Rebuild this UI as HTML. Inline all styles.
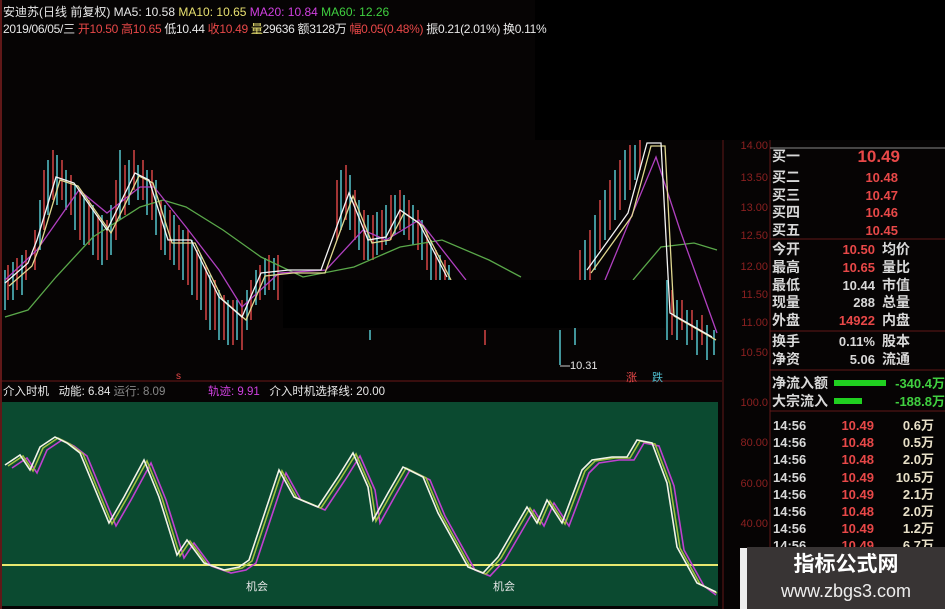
<!DOCTYPE html>
<html><head><meta charset="utf-8"><style>
*{margin:0;padding:0}
body{width:945px;height:609px;background:#060404;position:relative;overflow:hidden;font-family:"Liberation Sans","Noto Sans CJK SC",sans-serif;color:#ddd}
.t{position:absolute;white-space:nowrap;font-size:12px;line-height:14px}
.r{color:#e84848}.w{color:#e8e8e8}.y{color:#e8e070}.m{color:#d040e0}.g{color:#40d040}.gy{color:#888}
.ax{position:absolute;color:#8a2020;font-size:11px;width:46px;text-align:right;left:722px}
.rp{position:absolute;font-size:14px;line-height:17px;font-weight:bold;white-space:nowrap}
</style></head><body>
<svg width="945" height="609" style="position:absolute;left:0;top:0" xmlns="http://www.w3.org/2000/svg">
<rect x="2" y="402" width="716" height="204" fill="#0b4a30"/>
<line x1="1" y1="0" x2="1" y2="609" stroke="#601818" stroke-width="2"/>
<line x1="0" y1="381" x2="722" y2="381" stroke="#6a1818"/>
<line x1="723" y1="0" x2="723" y2="609" stroke="#601818"/>
<line x1="770" y1="140" x2="770" y2="609" stroke="#601818"/>
<line x1="770" y1="148" x2="945" y2="148" stroke="#888"/>
<line x1="770" y1="239" x2="945" y2="239" stroke="#601818"/>
<line x1="770" y1="331" x2="945" y2="331" stroke="#601818"/>
<line x1="770" y1="370" x2="945" y2="370" stroke="#601818"/>
<line x1="770" y1="411" x2="945" y2="411" stroke="#601818"/>
<path fill="none" stroke="#c84040" stroke-width="1.6" d="M8 265V300M17 258V290M26 250V280M35 230V270M44 170V230M53 150V200M62 160V200M71 175V215M80 190V240M89 200V245M98 215V260M107 220V260M116 180V240M125 165V215M134 150V190M143 160V200M152 170V220M161 200V250M170 210V260M179 225V270M188 230V285M197 250V300M206 265V320M215 280V330M224 295V340M233 300V345M242 300V350M251 280V320M260 265V300M269 255V290M278 255V300M337 180V240M346 165V220M355 190V240M364 210V260M373 215V260M382 210V250M391 195V240M400 190V230M409 200V240M418 210V250M427 230V270M436 250V290M445 260V300M485 330V345M580 250V290M590 230V280M600 200V250M610 180V230M620 160V210M630 145V190M640 140V170M672 290V335M682 300V330M692 310V340M702 315V345"/>
<path fill="none" stroke="#50b8c0" stroke-width="1.6" d="M5 270V310M13 262V300M22 255V295M40 200V250M48 160V215M57 155V205M66 170V210M75 185V230M84 195V245M93 205V255M102 215V265M111 205V255M120 150V220M129 160V205M138 165V200M147 170V215M156 180V235M165 205V255M174 215V265M183 230V280M192 240V295M201 255V310M210 275V330M219 290V340M228 300V345M237 300V340M247 290V330M256 270V305M265 258V295M274 258V290M341 170V230M350 175V230M359 200V250M368 215V260M377 212V255M386 205V245M395 195V235M404 195V235M413 205V245M422 220V260M431 240V280M440 255V295M449 265V300M370 330V340M560 330V365M575 300V345M585 240V285M595 215V270M605 190V240M615 170V220M625 150V200M635 145V180M667 280V340M677 300V340M687 310V345M697 320V355M707 325V360M714 330V355"/>
<g fill="none" stroke-width="1.3">
<polyline stroke="#5aa84a" points="5,317 28,310 56,277 93,237 140,207 163,200 186,207 223,230 261,257 303,277 354,267 400,247 442,240 489,260 521,277"/>
<polyline stroke="#5aa84a" points="633,280 661,247 694,243 717,250"/>
<polyline stroke="#b040c0" points="5,280 37,250 79,190 107,213 140,187 154,187 186,227 219,270 242,307 279,273 326,270 363,230 386,240 419,220 466,280"/>
<polyline stroke="#b040c0" points="605,280 656,157 680,230 717,333"/>
<polyline stroke="#e0d890" transform="translate(4,3)" points="5,283 28,263 37,240 56,177 74,183 107,230 135,173 149,180 168,240 191,240 219,297 242,317 261,273 289,270 321,270 349,193 368,240 386,237 400,210 419,223 447,277"/>
<polyline stroke="#e0d890" transform="translate(4,3)" points="587,270 628,213 647,143 661,143 670,313 712,337"/>
<polyline stroke="#f4f4f4" points="5,283 28,263 37,240 56,177 74,183 107,230 135,173 149,180 168,240 191,240 219,297 242,317 261,273 289,270 321,270 349,193 368,240 386,237 400,210 419,223 447,277"/>
<polyline stroke="#f4f4f4" points="587,270 628,213 647,143 661,143 670,313 712,337"/>
</g>
<rect x="283" y="280" width="382" height="48" fill="#000"/>
<rect x="535" y="0" width="410" height="140" fill="#000"/>
<line x1="2" y1="565" x2="718" y2="565" stroke="#e8e870" stroke-width="2"/>
<g fill="none" stroke-width="1.6">
<polyline stroke="#c040d0" transform="translate(7,3)" points="5,465 20,455 30,470 40,447 55,437 67,443 80,453 109,523 124,497 144,460 159,497 177,555 187,540 204,563 224,570 239,567 249,560 279,470 294,497 318,507 338,477 353,453 368,487 373,520 388,493 403,467 423,477 438,513 468,567 483,573 498,557 527,507 537,523 547,500 562,523 582,470 592,460 612,457 627,457 637,440 652,443 667,483 677,547 697,583 709,592"/>
<polyline stroke="#a0c040" transform="translate(3,1)" points="5,465 20,455 30,470 40,447 55,437 67,443 80,453 109,523 124,497 144,460 159,497 177,555 187,540 204,563 224,570 239,567 249,560 279,470 294,497 318,507 338,477 353,453 368,487 373,520 388,493 403,467 423,477 438,513 468,567 483,573 498,557 527,507 537,523 547,500 562,523 582,470 592,460 612,457 627,457 637,440 652,443 667,483 677,547 697,583 714,592"/>
<polyline stroke="#f4f4e8" points="5,465 20,455 30,470 40,447 55,437 67,443 80,453 109,523 124,497 144,460 159,497 177,555 187,540 204,563 224,570 239,567 249,560 279,470 294,497 318,507 338,477 353,453 368,487 373,520 388,493 403,467 423,477 438,513 468,567 483,573 498,557 527,507 537,523 547,500 562,523 582,470 592,460 612,457 627,457 637,440 652,443 667,483 677,547 697,583 716,592"/>
</g>
<rect x="834" y="380" width="52" height="6" fill="#20d020"/>
<rect x="834" y="398" width="28" height="6" fill="#20d020"/>
<line x1="560" y1="366" x2="570" y2="366" stroke="#ccc"/>
<rect x="740" y="548" width="8" height="61" fill="#eee"/>
<rect x="747" y="547" width="198" height="62" fill="#383434"/>
</svg>
<div class="t" style="left:3px;top:5px"><span class="w">安迪苏(日线 前复权) MA5: 10.58 </span><span class="y">MA10: 10.65 </span><span class="m">MA20: 10.84 </span><span class="g">MA60: 12.26</span></div>
<div class="t" style="left:3px;top:22px;letter-spacing:-0.3px"><span class="w">2019/06/05/三 </span><span class="r">开10.50 高10.65 </span><span class="w">低10.44 </span><span class="r">收10.49 </span><span class="y">量</span><span class="w">29636 额3128万 </span><span class="r">幅0.05(0.48%) </span><span class="w">振0.21(2.01%) 换0.11%</span></div>
<div class="t" style="left:3px;top:385px;font-size:11.5px"><span class="w">介入时机 &nbsp; 动能: 6.84 </span><span class="gy">运行: 8.09</span></div>
<div class="t" style="left:208px;top:385px;font-size:11.5px"><span class="m">轨迹: 9.91</span> <span class="w">&nbsp; 介入时机选择线: 20.00</span></div>
<div class="t w" style="left:246px;top:580px;font-size:11px">机会</div>
<div class="t w" style="left:493px;top:580px;font-size:11px">机会</div>
<div class="t w" style="left:570px;top:359px;font-size:11px">10.31</div>
<div class="t r" style="left:626px;top:371px;font-size:11px">涨</div>
<div class="t" style="left:652px;top:371px;font-size:11px;color:#50c0d0">跌</div>
<div class="t r" style="left:176px;top:370px;font-size:10px">s</div>
<div class="ax" style="top:140px">14.00</div><div class="ax" style="top:172px">13.50</div><div class="ax" style="top:202px">13.00</div><div class="ax" style="top:230px">12.50</div><div class="ax" style="top:261px">12.00</div><div class="ax" style="top:289px">11.50</div><div class="ax" style="top:317px">11.00</div><div class="ax" style="top:347px">10.50</div>
<div class="ax" style="top:397px">100.0</div><div class="ax" style="top:437px">80.00</div><div class="ax" style="top:478px">60.00</div><div class="ax" style="top:518px">40.00</div>

<div class="rp" style="left:772px;top:148px;color:#d8d8d8">买一</div><div class="rp" style="left:820px;width:80px;text-align:right;top:148px;color:#e84848;font-size:17px">10.49</div>
<div class="rp" style="left:772px;top:169px;color:#d8d8d8">买二</div><div class="rp" style="left:818px;width:80px;text-align:right;top:169px;color:#e84848;font-size:13px">10.48</div>
<div class="rp" style="left:772px;top:186.5px;color:#d8d8d8">买三</div><div class="rp" style="left:818px;width:80px;text-align:right;top:186.5px;color:#e84848;font-size:13px">10.47</div>
<div class="rp" style="left:772px;top:204px;color:#d8d8d8">买四</div><div class="rp" style="left:818px;width:80px;text-align:right;top:204px;color:#e84848;font-size:13px">10.46</div>
<div class="rp" style="left:772px;top:221.5px;color:#d8d8d8">买五</div><div class="rp" style="left:818px;width:80px;text-align:right;top:221.5px;color:#e84848;font-size:13px">10.45</div>

<div class="rp" style="left:772px;top:241px;color:#d8d8d8">今开</div><div class="rp" style="left:795px;width:80px;text-align:right;top:241px;color:#e84848;font-size:13px">10.50</div><div class="rp" style="left:882px;top:241px;color:#d8d8d8">均价</div>
<div class="rp" style="left:772px;top:259px;color:#d8d8d8">最高</div><div class="rp" style="left:795px;width:80px;text-align:right;top:259px;color:#e84848;font-size:13px">10.65</div><div class="rp" style="left:882px;top:259px;color:#d8d8d8">量比</div>
<div class="rp" style="left:772px;top:277px;color:#d8d8d8">最低</div><div class="rp" style="left:795px;width:80px;text-align:right;top:277px;color:#d8d8d8;font-size:13px">10.44</div><div class="rp" style="left:882px;top:277px;color:#d8d8d8">市值</div>
<div class="rp" style="left:772px;top:294px;color:#d8d8d8">现量</div><div class="rp" style="left:795px;width:80px;text-align:right;top:294px;color:#d8d8d8;font-size:13px">288</div><div class="rp" style="left:882px;top:294px;color:#d8d8d8">总量</div>
<div class="rp" style="left:772px;top:312px;color:#d8d8d8">外盘</div><div class="rp" style="left:795px;width:80px;text-align:right;top:312px;color:#e84848;font-size:13px">14922</div><div class="rp" style="left:882px;top:312px;color:#d8d8d8">内盘</div>
<div class="rp" style="left:772px;top:333px;color:#d8d8d8">换手</div><div class="rp" style="left:795px;width:80px;text-align:right;top:333px;color:#d8d8d8;font-size:13px">0.11%</div><div class="rp" style="left:882px;top:333px;color:#d8d8d8">股本</div>
<div class="rp" style="left:772px;top:351px;color:#d8d8d8">净资</div><div class="rp" style="left:795px;width:80px;text-align:right;top:351px;color:#d8d8d8;font-size:13px">5.06</div><div class="rp" style="left:882px;top:351px;color:#d8d8d8">流通</div>
<div class="rp" style="left:772px;top:375px;color:#d8d8d8">净流入额</div><div class="rp" style="left:865px;width:80px;text-align:right;top:375px;color:#40d040;font-size:13px">-340.4万</div>
<div class="rp" style="left:772px;top:393px;color:#d8d8d8">大宗流入</div><div class="rp" style="left:865px;width:80px;text-align:right;top:393px;color:#40d040;font-size:13px">-188.8万</div>

<div style="position:absolute;left:773px;top:417px;font-size:13px;line-height:17.2px;font-weight:bold;color:#d8d8d8">14:56<br>14:56<br>14:56<br>14:56<br>14:56<br>14:56<br>14:56<br>14:56</div>
<div style="position:absolute;left:794px;width:80px;text-align:right;top:417px;font-size:13px;line-height:17.2px;font-weight:bold;color:#e84848">10.49<br>10.48<br>10.48<br>10.49<br>10.49<br>10.48<br>10.49<br>10.49</div>
<div style="position:absolute;left:854px;width:80px;text-align:right;top:417px;font-size:13px;line-height:17.2px;font-weight:bold;color:#e8e0c8">0.6万<br>0.5万<br>2.0万<br>10.5万<br>2.1万<br>2.0万<br>1.2万<br>6.7万</div>

<div style="position:absolute;left:740px;top:548px;width:8px;height:61px;background:#eee"></div>
<div style="position:absolute;left:747px;top:547px;width:198px;height:62px;background:#383434"></div>
<div class="t" style="left:747px;top:552px;width:198px;text-align:center;font-size:21px;line-height:26px;font-weight:bold;color:#fff">指标公式网</div>
<div class="t" style="left:747px;top:580px;width:198px;text-align:center;font-size:18px;line-height:22px;color:#eee">www.zbgs3.com</div>
</body></html>
